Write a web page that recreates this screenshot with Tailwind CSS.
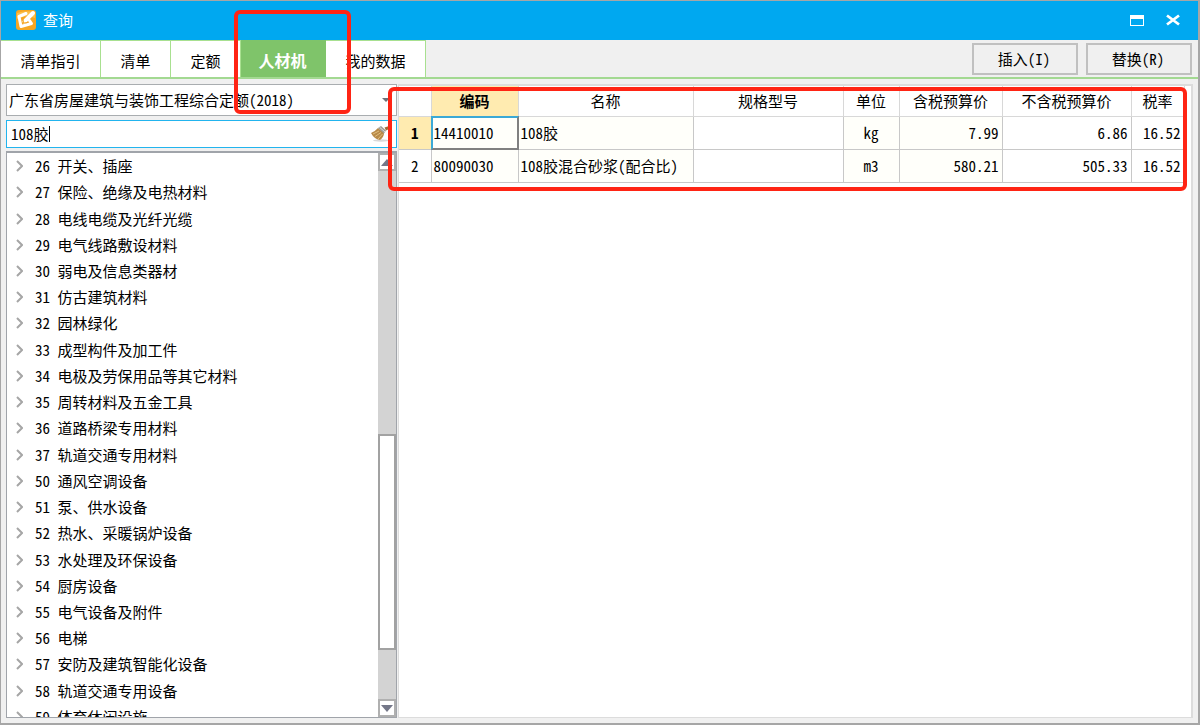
<!DOCTYPE html>
<html lang="zh-CN">
<head>
<meta charset="utf-8">
<title>查询</title>
<script src="https://cdn.jsdelivr.net/npm/@tailwindcss/browser@4"></script>
</head>
<body class="h-screen overflow-hidden bg-[#f0f0f0] font-['Noto_Sans_CJK_SC',sans-serif] text-[15px] leading-5 text-black [font-feature-settings:'hwid']">
<div class="relative flex h-full flex-col border border-r-2 border-b-2 border-[#a6a6a6]">
  <header class="flex h-[39px] shrink-0 items-center bg-[#00a8f0] pr-[18px] pb-px pl-[15px] text-white">
    <svg class="size-5" viewBox="0 0 20 20" aria-hidden="true">
      <rect width="20" height="20" rx="3" fill="#f6a623"/>
      <path d="M1 3 Q9 0 19 2 L19 8 Q10 4 1 9Z" fill="#fbc04a"/>
      <path d="M10 3.500 L3 6.500 L5 16.500 L15.500 13.500 L13.500 10.500" fill="none" stroke="#fff" stroke-width="3" stroke-linejoin="round" stroke-linecap="round"/>
      <path d="M8.500 11.500 L17 3" stroke="#fff" stroke-width="4" stroke-linecap="round"/>
      <path d="M7 9 L7.500 13 L11.500 12.500" fill="none" stroke="#f6a623" stroke-width="1"/>
    </svg>
    <h1 class="ml-[7px] flex-1">查询</h1>
    <button class="mr-[22px]" aria-label="最大化"><svg class="block" width="14" height="11" viewBox="0 0 14 11"><path d="M0 0H14V11H0Z M1 4V10H13V4Z" fill="#fff" fill-rule="evenodd"/></svg></button>
    <button aria-label="关闭"><svg class="block" width="14" height="12" viewBox="0 0 14 12"><path d="M1 1.500 L13 10.500 M13 1.500 L1 10.500" stroke="#fff" stroke-width="2.800"/></svg></button>
  </header>

  <nav class="flex h-[39px] shrink-0 items-stretch border-b-2 border-[#a3d992] pr-[6px]">
    <button class="w-[100px] border-t border-r border-[#a8e090] bg-white pt-1">清单指引</button>
    <button class="w-[70px] border-t border-r border-[#a8e090] bg-white pt-1">清单</button>
    <button class="w-[70px] border-t border-r border-[#a8e090] bg-white pt-1">定额</button>
    <button class="w-[85px] bg-[#7fc46a] pt-[2px] pr-[2px] text-base font-bold text-white">人材机</button>
    <button class="w-[100px] border-t border-r border-[#a8e090] bg-white pt-1">我的数据</button>
    <div class="ml-auto flex items-center gap-2">
      <button class="h-8 w-[106px] border-2 border-[#c0c0c0] bg-[#f0f0f0] pr-[2px]">插入(I)</button>
      <button class="h-8 w-[106px] border-2 border-[#c0c0c0] bg-[#f0f0f0] pr-[2px]">替换(R)</button>
    </div>
  </nav>

  <main class="flex min-h-0 flex-1 gap-px p-[5px]">
    <section class="flex w-[391px] shrink-0 flex-col">
      <div class="relative h-8 shrink-0">
        <select aria-label="定额库" class="h-full w-full appearance-none border border-[#a9adb0] bg-white pl-[2px]"><option>广东省房屋建筑与装饰工程综合定额(2018)</option></select>
        <svg class="pointer-events-none absolute top-[14px] right-[7px]" width="8" height="4" viewBox="0 0 8 4"><path d="M0 0H8L4 4Z" fill="#6e7078"/></svg>
      </div>
      <div class="relative mt-1 h-7 shrink-0">
        <input aria-label="搜索" value="108胶" class="h-full w-full border border-[#22b4ee] bg-white pb-[2px] pl-1">
        <span class="absolute top-[6px] left-[43px] h-4 w-px bg-black"></span>
        <button aria-label="清除" class="absolute top-[5px] right-[5px]">
          <svg class="block" width="22" height="17" viewBox="0 0 22 17">
            <ellipse cx="11" cy="15.500" rx="8" ry="1.200" fill="#d8d8d8"/>
            <path d="M1 8 Q5 6.500 8 3 L14 8 Q14 12 10 15 Q4 14 1 8Z" fill="#b88a48"/>
            <path d="M3 9 L9 6 M5 11.500 L11 7.500 M8 14 L12.500 9" stroke="#e0bd7d" stroke-width="1"/>
            <path d="M8 3 L11 1 L16 5.500 L14 8.500Z" fill="#9a9a92"/>
            <path d="M9.500 2.200 L15 7" stroke="#ddd" stroke-width="1"/>
            <path d="M14.500 2.500 L20 0.800 L20 3.500 L16 5.500Z" fill="#a06d38"/>
          </svg>
        </button>
      </div>
      <div class="mt-[3px] flex min-h-0 flex-1 overflow-hidden border border-t-2 border-[#a0a4aa] bg-white">
        <ul id="tree" class="grid h-[577px] flex-1 auto-rows-fr"></ul>
        <div class="flex w-[18px] flex-col bg-[#d3d3d3]">
          <button aria-label="向上滚动" class="flex h-[18px] shrink-0 items-center justify-center border-2 border-[#b0b0b0] bg-white"><svg width="12" height="7" viewBox="0 0 12 7"><path d="M0 7H12L6 0Z" fill="#747788"/></svg></button>
          <div class="mt-[263px] h-[216px] shrink-0 border-2 border-[#a2a2a2] bg-white"></div>
          <button aria-label="向下滚动" class="mt-auto flex h-[18px] shrink-0 items-center justify-center border-2 border-[#b0b0b0] bg-white"><svg width="12" height="7" viewBox="0 0 12 7"><path d="M0 0H12L6 7Z" fill="#747788"/></svg></button>
        </div>
      </div>
    </section>

    <section class="min-w-0 flex-1 border border-t-2 border-r-2 border-[#dcdcdc] bg-white">
      <table class="table-fixed border-collapse [&_td]:border-r [&_td]:border-b [&_td]:border-[#c8c8c8] [&_th]:border-r [&_th]:border-b [&_th]:border-[#d8d8d8]">
        <colgroup><col class="w-8"><col class="w-[87px]"><col class="w-[175px]"><col class="w-[150px]"><col class="w-14"><col class="w-[103px]"><col class="w-[129px]"><col class="w-[53px]"></colgroup>
        <thead>
          <tr class="h-[30px] *:p-0 *:font-normal">
            <th></th><th class="bg-[#ffebb0]"><b>编码</b></th><th>名称</th><th>规格型号</th><th>单位</th><th>含税预算价</th><th>不含税预算价</th><th>税率</th>
          </tr>
        </thead>
        <tbody>
          <tr class="h-[33px] *:p-0">
            <td class="bg-[#ffebb0] text-center font-bold">1</td>
            <td class="relative bg-[#fffffa] pl-[2px]!">14410010<span class="absolute -inset-px border-2 border-t-[#3ba9d6] border-r-[#808080] border-b-[#808080] border-l-[#3ba9d6]"></span></td>
            <td class="bg-[#fffffa] pl-[2px]!">108胶</td><td></td><td class="bg-[#fffffa] text-center">kg</td><td class="bg-[#fffffa] pr-[3px]! text-right">7.99</td><td class="pr-[3px]! text-right">6.86</td><td class="pr-[3px]! text-right">16.52</td>
          </tr>
          <tr class="h-[33px] *:p-0">
            <td class="text-center">2</td>
            <td class="bg-[#fffffa] pl-[2px]!">80090030</td>
            <td class="bg-[#fffffa] pl-[2px]!">108胶混合砂浆(配合比)</td><td></td><td class="bg-[#fffffa] text-center">m3</td><td class="bg-[#fffffa] pr-[3px]! text-right">580.21</td><td class="pr-[3px]! text-right">505.33</td><td class="pr-[3px]! text-right">16.52</td>
          </tr>
        </tbody>
      </table>
    </section>
  </main>

  <div class="pointer-events-none absolute top-[9px] left-[233px] h-[104px] w-[117px] rounded-md border-4 border-[#ff2414]"></div>
  <div class="pointer-events-none absolute top-[86px] left-[387px] h-[104px] w-[799px] rounded-md border-4 border-[#ff2414]"></div>
</div>
<script>
const items = ["26 开关、插座","27 保险、绝缘及电热材料","28 电线电缆及光纤光缆","29 电气线路敷设材料","30 弱电及信息类器材","31 仿古建筑材料","32 园林绿化","33 成型构件及加工件","34 电极及劳保用品等其它材料","35 周转材料及五金工具","36 道路桥梁专用材料","37 轨道交通专用材料","50 通风空调设备","51 泵、供水设备","52 热水、采暖锅炉设备","53 水处理及环保设备","54 厨房设备","55 电气设备及附件","56 电梯","57 安防及建筑智能化设备","58 轨道交通专用设备","59 体育休闲设施"];
document.getElementById("tree").innerHTML = items.map(t => `<li class="flex items-center gap-3 whitespace-pre pl-[9px]"><svg width="7" height="12" viewBox="0 0 7 12"><path d="M1 1L6 6L1 11" fill="none" stroke="#a6a6a6" stroke-width="2"/></svg><span>${t}</span></li>`).join("");
</script>
</body>
</html>
